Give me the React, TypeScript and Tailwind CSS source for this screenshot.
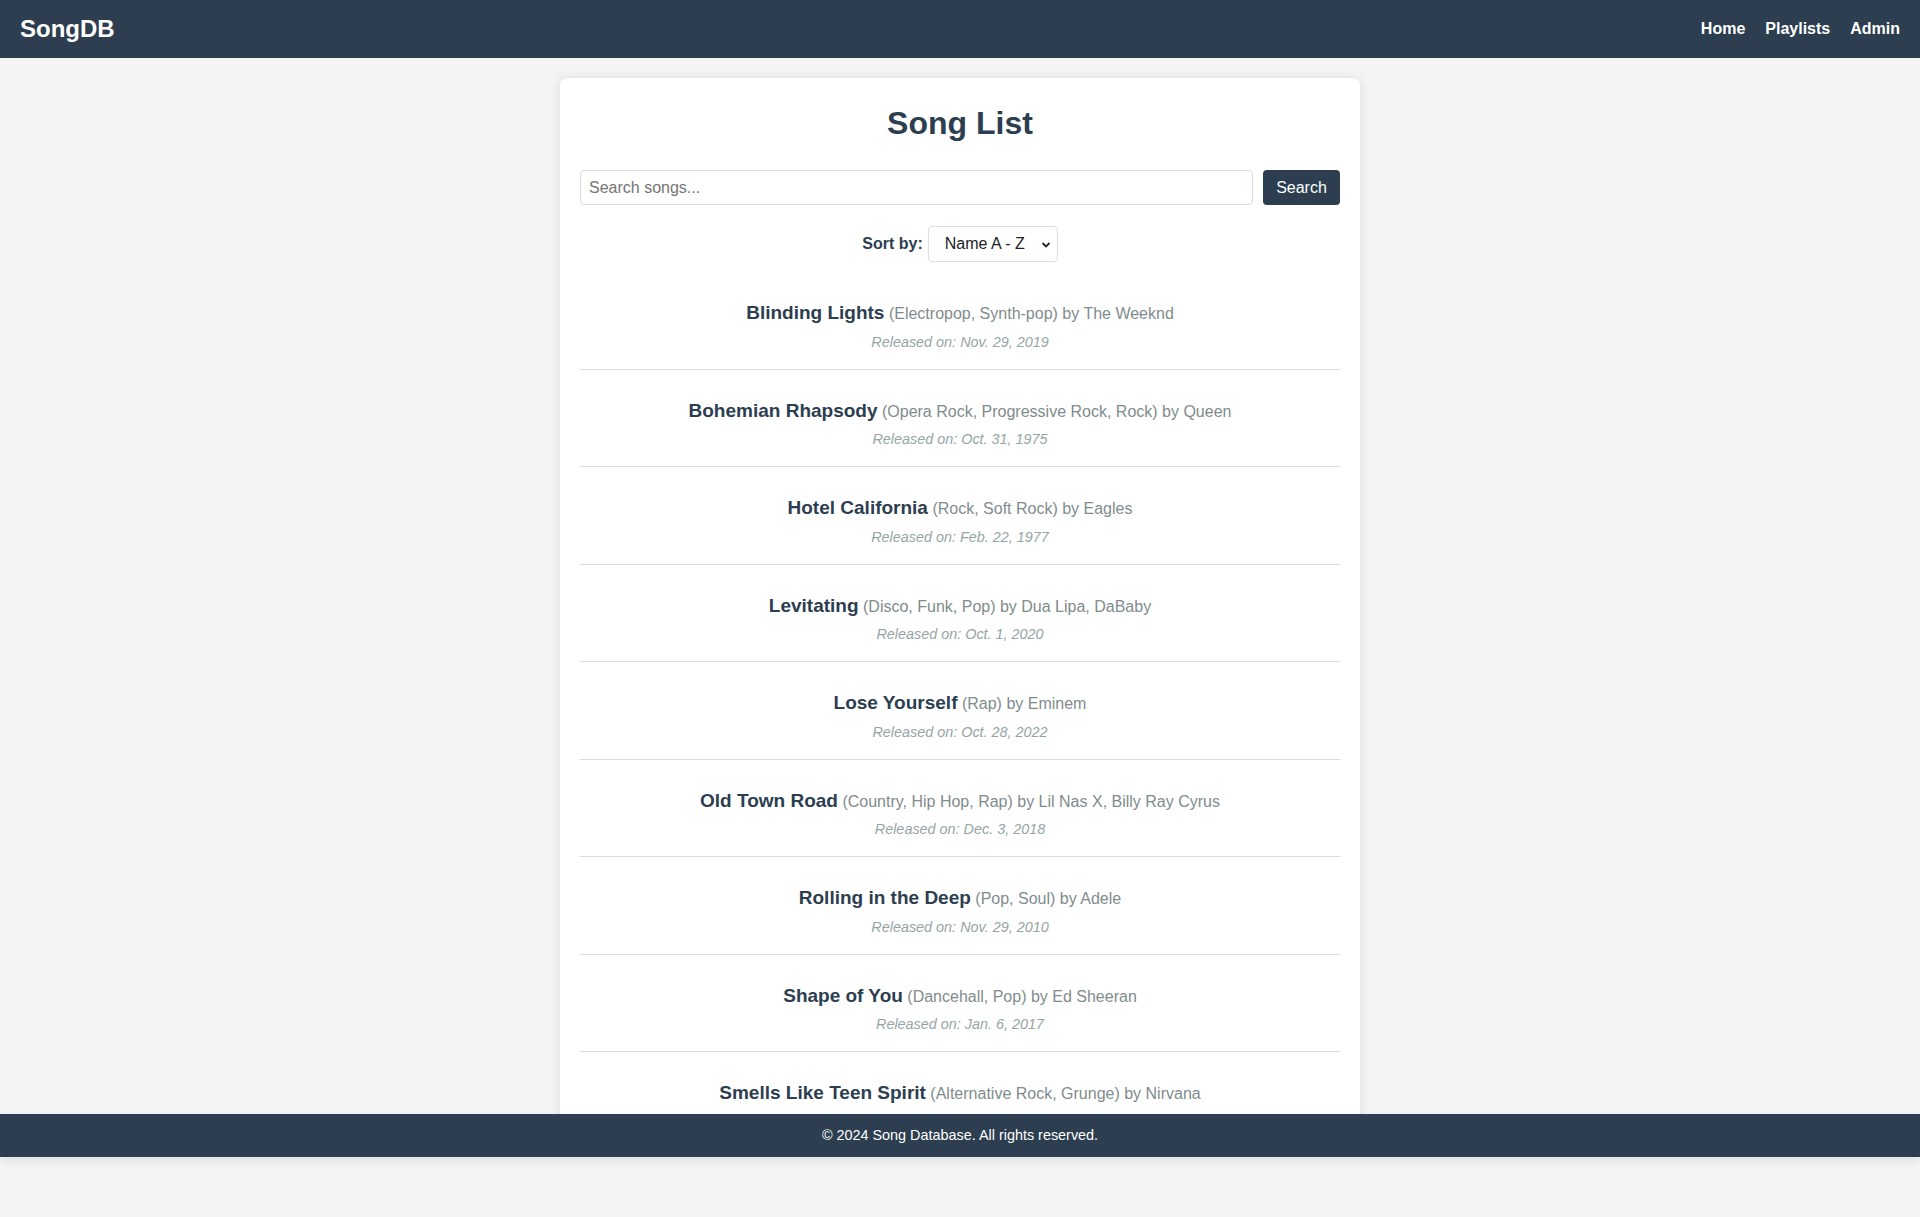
import React from "react";

const songs = [
  { title: "Blinding Lights", genres: "Electropop, Synth-pop", artists: "The Weeknd", date: "Nov. 29, 2019" },
  { title: "Bohemian Rhapsody", genres: "Opera Rock, Progressive Rock, Rock", artists: "Queen", date: "Oct. 31, 1975" },
  { title: "Hotel California", genres: "Rock, Soft Rock", artists: "Eagles", date: "Feb. 22, 1977" },
  { title: "Levitating", genres: "Disco, Funk, Pop", artists: "Dua Lipa, DaBaby", date: "Oct. 1, 2020" },
  { title: "Lose Yourself", genres: "Rap", artists: "Eminem", date: "Oct. 28, 2022" },
  { title: "Old Town Road", genres: "Country, Hip Hop, Rap", artists: "Lil Nas X, Billy Ray Cyrus", date: "Dec. 3, 2018" },
  { title: "Rolling in the Deep", genres: "Pop, Soul", artists: "Adele", date: "Nov. 29, 2010" },
  { title: "Shape of You", genres: "Dancehall, Pop", artists: "Ed Sheeran", date: "Jan. 6, 2017" },
  { title: "Smells Like Teen Spirit", genres: "Alternative Rock, Grunge", artists: "Nirvana", date: "" },
];

export default function App() {
  return (
    <div
      className="flex h-[1217px] w-full flex-col overflow-hidden bg-[#f4f4f4]"
      style={{ fontFamily: '"Liberation Sans", Arial, sans-serif' }}
    >
      <header className="flex h-[58px] shrink-0 items-center justify-between bg-[#2c3e50] px-[20px] text-white">
        <div className="text-[24px] font-bold leading-[28px]">SongDB</div>
        <nav className="flex gap-[20px] text-[16px] font-bold">
          <a>Home</a>
          <a>Playlists</a>
          <a>Admin</a>
        </nav>
      </header>

      <main className="h-[1056px] shrink-0 overflow-hidden pt-[20px]">
        <div className="mx-auto h-[1100px] w-[800px] rounded-[8px] bg-white px-[20px] pt-[27px] pb-[20px] shadow-[0_0_10px_rgba(0,0,0,0.1)]">
          <h1 className="text-center text-[32px] font-bold leading-[36px] text-[#2c3e50]">Song List</h1>

          <div className="mt-[29px] flex gap-[10px]">
            <input
              className="h-[35px] flex-1 rounded-[4px] border border-[#dddddd] px-[8px] text-[16px] text-[#333] outline-none placeholder:text-[#757575]"
              placeholder="Search songs..."
            />
            <button className="h-[35px] w-[77px] rounded-[4px] bg-[#2c3e50] text-[16px] text-white">Search</button>
          </div>

          <div className="mt-[21px] flex items-center justify-center gap-[5px]">
            <span className="text-[16px] font-bold text-[#2c3e50]">Sort by:</span>
            <div className="relative h-[36px] w-[130px] rounded-[4px] border border-[#dddddd]">
              <div className="flex h-full items-center pl-[16px] text-[16px] text-[#222]">Name A - Z</div>
              <svg
                className="absolute right-[6px] top-[14px]"
                width="10"
                height="8"
                viewBox="0 0 10 8"
                fill="none"
                stroke="#222"
                strokeWidth="1.8"
              >
                <path d="M1.5 2 L5 5.5 L8.5 2" />
              </svg>
            </div>
          </div>

          <ul className="mt-[10px]">
            {songs.map((s) => (
              <li key={s.title} className="border-b border-[#dddddd] pt-[30px] pb-[18px] text-center">
                <div className="leading-[22px]">
                  <span className="text-[19px] font-bold text-[#2c3e50]">{s.title}</span>{" "}
                  <span className="text-[16px] text-[#7f8c8d]">
                    ({s.genres}) by {s.artists}
                  </span>
                </div>
                {s.date ? (
                  <div className="mt-[8.5px] text-[14.4px] italic leading-[17px] text-[#95a5a6]">
                    Released on: {s.date}
                  </div>
                ) : null}
              </li>
            ))}
          </ul>
        </div>
      </main>

      <footer className="relative z-10 flex h-[43px] shrink-0 items-center justify-center bg-[#2c3e50] text-[14.4px] text-white shadow-[0_4px_10px_rgba(0,0,0,0.08)]">
        © 2024 Song Database. All rights reserved.
      </footer>
    </div>
  );
}
